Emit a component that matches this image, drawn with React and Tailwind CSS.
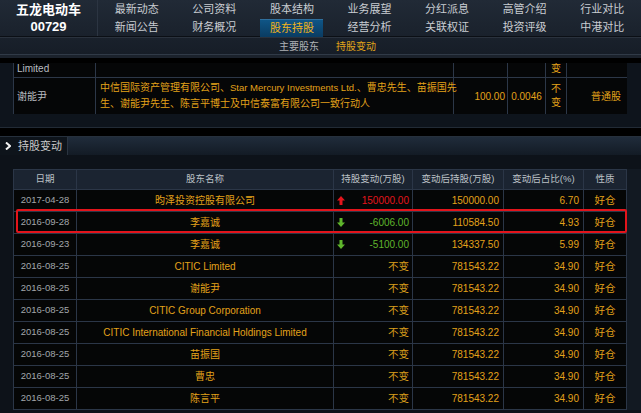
import React from "react";

const font = { fontFamily: '"Liberation Sans", "Noto Sans CJK SC", sans-serif' };

const navRows = [
  ["最新动态", "公司资料", "股本结构", "业务展望", "分红派息", "高管介绍", "行业对比"],
  ["新闻公告", "财务概况", "股东持股", "经营分析", "关联权证", "投资评级", "中港对比"],
];

const changes = [
  { date: "2017-04-28", name: "昀泽投资控股有限公司", delta: "150000.00", dir: "up", after: "150000.00", pct: "6.70" },
  { date: "2016-09-28", name: "李嘉诚", delta: "-6006.00", dir: "down", after: "110584.50", pct: "4.93" },
  { date: "2016-09-23", name: "李嘉诚", delta: "-5100.00", dir: "down", after: "134337.50", pct: "5.99" },
  { date: "2016-08-25", name: "CITIC Limited", delta: "不变", after: "781543.22", pct: "34.90" },
  { date: "2016-08-25", name: "谢能尹", delta: "不变", after: "781543.22", pct: "34.90" },
  { date: "2016-08-25", name: "CITIC Group Corporation", delta: "不变", after: "781543.22", pct: "34.90" },
  { date: "2016-08-25", name: "CITIC International Financial Holdings Limited", delta: "不变", after: "781543.22", pct: "34.90" },
  { date: "2016-08-25", name: "苗振国", delta: "不变", after: "781543.22", pct: "34.90" },
  { date: "2016-08-25", name: "曹忠", delta: "不变", after: "781543.22", pct: "34.90" },
  { date: "2016-08-25", name: "陈言平", delta: "不变", after: "781543.22", pct: "34.90" },
];

function Arrow({ dir }) {
  // small filled arrow, red up / green down
  if (dir === "up") {
    return (
      <svg width="8" height="9" viewBox="0 0 8 9" className="shrink-0">
        <path d="M4 0 L8 4.5 L5.5 4.5 L5.5 9 L2.5 9 L2.5 4.5 L0 4.5 Z" fill="#e3151c" />
      </svg>
    );
  }
  return (
    <svg width="8" height="9" viewBox="0 0 8 9" className="shrink-0">
      <path d="M4 9 L8 4.5 L5.5 4.5 L5.5 0 L2.5 0 L2.5 4.5 L0 4.5 Z" fill="#5fb52c" />
    </svg>
  );
}

function Header() {
  return (
    <div className="bg-gradient-to-b from-[#212a36] to-[#161d27] border-b-[3px] border-[#1b222c]">
      <div className="flex h-[37px] border-b border-[#0b0f15]">
        <div className="w-[98px] shrink-0 border-r border-[#2c3542] flex flex-col items-center justify-center text-white font-bold text-[13px] leading-[17px]">
          <span>五龙电动车</span>
          <span>00729</span>
        </div>
        <div className="flex-1 grid grid-cols-7 grid-rows-2">
          {navRows.map((row) =>
            row.map((item) => {
              const active = item === "股东持股";
              return (
                <div key={item} className="flex items-center justify-center">
                  {active ? (
                    <span className="w-[63px] h-[18px] flex items-center justify-center bg-gradient-to-b from-[#0f5586] to-[#0a3c62] border-t border-[#2f6f9d] text-[#f2b51b] text-[11px] mt-[1px]">
                      {item}
                    </span>
                  ) : (
                    <span className="text-[#c9cdd2] text-[11px] mt-[1px]">{item}</span>
                  )}
                </div>
              );
            })
          )}
        </div>
      </div>
      <div className="h-[18px] flex items-center border-t border-[#2a323d] border-b border-b-[#303a47] text-[10px]">
        <span className="ml-[279px] text-[#aeb2b6]">主要股东</span>
        <span className="ml-[17px] text-[#e0a419]">持股变动</span>
      </div>
    </div>
  );
}

function TopFragment() {
  const cell = "border border-[#2c3748] bg-[#050607]";
  return (
    <div className="bg-[#0e141c] pl-[13px] pr-[14px] h-[65px] border-b border-[#222b36]">
      <div className="h-[51px] overflow-hidden">
        <table className="w-[614px] border-collapse table-fixed mt-[-18px] text-[10px]">
          <colgroup>
            <col className="w-[82px]" />
            <col className="w-[358px]" />
            <col className="w-[54px]" />
            <col className="w-[38px]" />
            <col className="w-[21px]" />
            <col className="w-[61px]" />
          </colgroup>
          <tbody>
            <tr className="h-[32px]">
              <td className={`${cell} text-[#b9bcc0] px-[3px] leading-[14px] align-bottom pb-[1px]`}>
                CITIC Group<br />Limited
              </td>
              <td className={`${cell} text-[#e3a21a] px-[3px] align-top`}>中信股份</td>
              <td className={`${cell}`} />
              <td className={`${cell}`} />
              <td className={`${cell} text-[#e3a21a] text-center leading-[14px]`}>不<br />变</td>
              <td className={`${cell} text-[#e3a21a] text-right pr-[6px] align-top`}>普通股</td>
            </tr>
            <tr className="h-[37px]">
              <td className={`${cell} text-[#b9bcc0] px-[3px]`}>谢能尹</td>
              <td className={`${cell} text-[#e3a21a] px-[4px] text-[10px] leading-[16px] whitespace-nowrap`}>
                中信国际资产管理有限公司、<span className="text-[9.5px]">Star Mercury Investments Ltd.</span>、曹忠先生、苗振国先<br />
                生、谢能尹先生、陈言平博士及中信泰富有限公司一致行动人
              </td>
              <td className={`${cell} text-[#e3a21a] text-right pr-[2px]`}>100.00</td>
              <td className={`${cell} text-[#e3a21a] text-center`}>0.0046</td>
              <td className={`${cell} text-[#e3a21a] text-center leading-[14px]`}>不<br />变</td>
              <td className={`${cell} text-[#e3a21a] text-right pr-[6px]`}>普通股</td>
            </tr>
          </tbody>
        </table>
      </div>
    </div>
  );
}

function SectionBar() {
  return (
    <div className="flex h-[19px] bg-gradient-to-b from-[#202c3b] to-[#131b25] border-t border-[#26303c]">
      <div className="w-[68px] bg-[#0e141b] flex items-center pl-[5px] gap-[7px] border-r border-[#2a3440]">
        <svg width="6" height="8" viewBox="0 0 6 8">
          <path d="M1 0.5 L5 4 L1 7.5" stroke="#f2f2f2" strokeWidth="2" fill="none" />
        </svg>
        <span className="text-[11px] text-[#c9c9c9]">持股变动</span>
      </div>
    </div>
  );
}

function ChangeTable() {
  const cell = "border border-[#2b3647]";
  const th = `${cell} bg-[#1b2431] text-[#bcc1c6] font-normal text-[9.5px] text-center`;
  return (
    <div className="flex bg-[#0d1219] pt-[14px] pb-[6px]">
      <div className="w-[13px] shrink-0" />
      <div className="relative">
        <table className="w-[613px] border-collapse table-fixed text-[10px]">
          <colgroup>
            <col className="w-[63px]" />
            <col className="w-[257px]" />
            <col className="w-[79px]" />
            <col className="w-[91px]" />
            <col className="w-[80px]" />
            <col className="w-[43px]" />
          </colgroup>
          <thead>
            <tr className="h-[20px]">
              <th className={th}>日期</th>
              <th className={th}>股东名称</th>
              <th className={th}>持股变动(万股)</th>
              <th className={th}>变动后持股(万股)</th>
              <th className={th}>变动后占比(%)</th>
              <th className={th}>性质</th>
            </tr>
          </thead>
          <tbody>
            {changes.map((c, i) => (
              <tr key={i} className="h-[22px] bg-[#050606]">
                <td className={`${cell} text-[#a2a6ab] text-center text-[9.5px]`}>{c.date}</td>
                <td className={`${cell} text-[#e3a21a] text-center`}>{c.name}</td>
                <td className={`${cell} px-[3px]`}>
                  <div className="flex items-center justify-between">
                    {c.dir ? <Arrow dir={c.dir} /> : <span />}
                    <span
                      className={
                        c.dir === "up"
                          ? "text-[#e3151c]"
                          : c.dir === "down"
                          ? "text-[#5fb52c]"
                          : "text-[#d99e1c] text-[10.5px]"
                      }
                    >
                      {c.delta}
                    </span>
                  </div>
                </td>
                <td className={`${cell} text-[#e3a21a] text-right pr-[4px]`}>{c.after}</td>
                <td className={`${cell} text-[#e3a21a] text-right pr-[4px]`}>{c.pct}</td>
                <td className={`${cell} text-[#e3a21a] text-center text-[10.5px]`}>好仓</td>
              </tr>
            ))}
          </tbody>
        </table>
        {/* red annotation box around 2016-09-28 row */}
        <div className="absolute left-[3px] right-0 top-[40px] h-[24px] border-2 border-[#e3141b] rounded-[2px] pointer-events-none" />
      </div>
      <div className="flex-1 bg-[#121922]" />
    </div>
  );
}

export default function App() {
  return (
    <div className="w-[641px] h-[413px] overflow-hidden bg-[#0d1219]" style={font}>
      <Header />
      <div className="h-[5px] bg-black" />
      <TopFragment />
      <div className="h-[8px] bg-black" />
      <SectionBar />
      <ChangeTable />
    </div>
  );
}
